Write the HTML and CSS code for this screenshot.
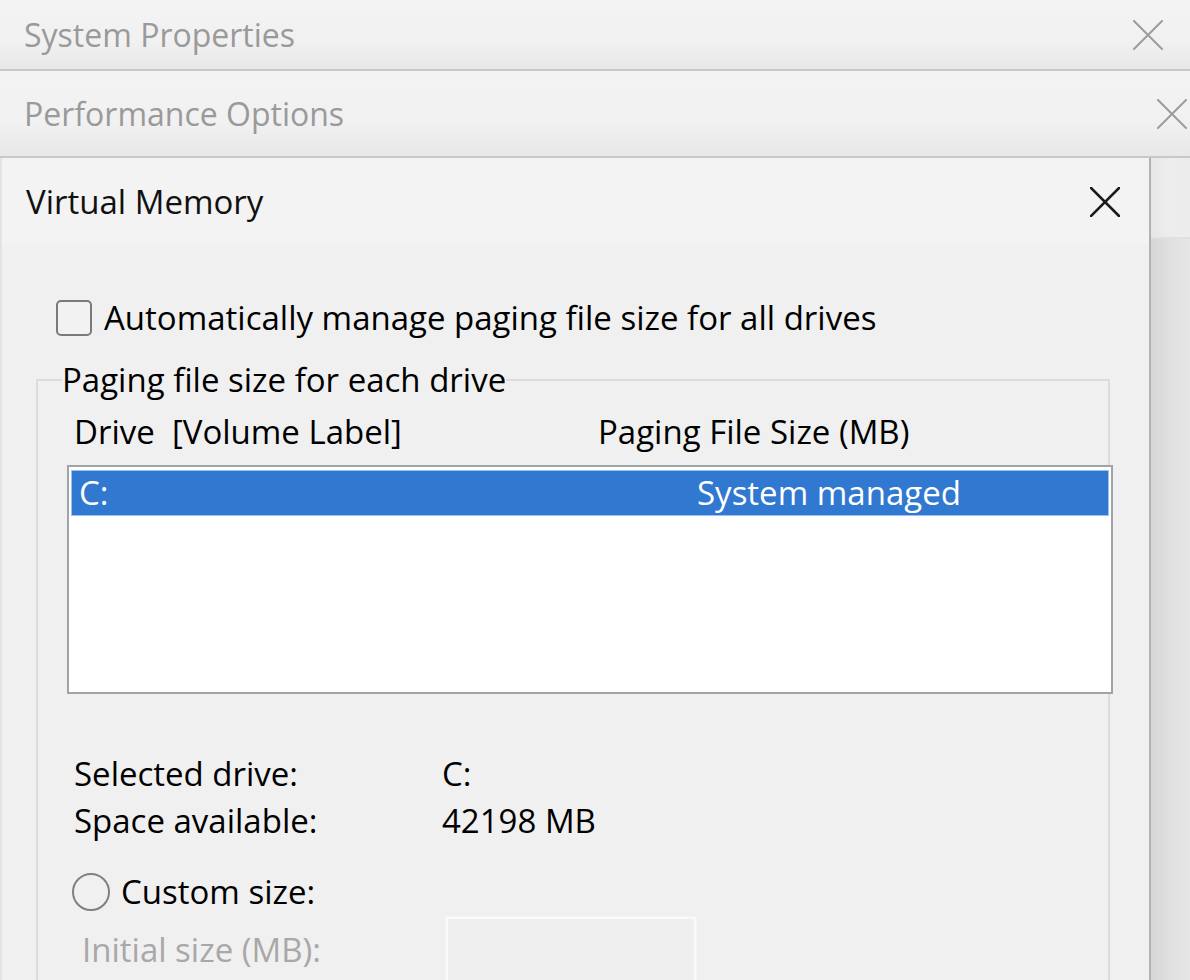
FILE: index.html
```html
<!DOCTYPE html>
<html lang="en">
<head>
<meta charset="utf-8">
<title>Virtual Memory</title>
<link rel="stylesheet" href="styles.css">
</head>
<body>
<div class="screen">
  <header class="bar bar-sys">
    <span class="bar-title">System Properties</span>
    <svg class="x-icon x-gray" viewBox="0 0 30 30" width="30" height="30"><path d="M1 1 L29 29 M29 1 L1 29"/></svg>
  </header>
  <header class="bar bar-perf">
    <span class="bar-title">Performance Options</span>
    <svg class="x-icon x-gray" viewBox="0 0 30 30" width="30" height="30"><path d="M1 1 L29 29 M29 1 L1 29"/></svg>
  </header>
  <div class="stack">
    <section class="vm">
      <div class="vm-title">
        <span>Virtual Memory</span>
        <svg class="x-icon x-dark" viewBox="0 0 30 30" width="30" height="30"><path d="M1 1 L29 29 M29 1 L1 29"/></svg>
      </div>
      <div class="vm-body">
        <label class="check-row">
          <span class="checkbox"></span>
          <span>Automatically manage paging file size for all drives</span>
        </label>
        <fieldset class="group">
          <legend>Paging file size for each drive</legend>
          <div class="list-head">
            <span class="col-drive">Drive  [Volume Label]</span>
            <span class="col-size">Paging File Size (MB)</span>
          </div>
          <div class="listbox">
            <div class="list-row selected">
              <span class="row-drive">C:</span>
              <span class="row-size">System managed</span>
            </div>
          </div>
          <dl class="info">
            <dt>Selected drive:</dt><dd>C:</dd>
            <dt>Space available:</dt><dd>42198 MB</dd>
          </dl>
          <label class="radio-row">
            <span class="radio"></span>
            <span>Custom size:</span>
          </label>
          <div class="field-row">
            <span class="field-label">Initial size (MB):</span>
            <span class="field-input"></span>
          </div>
        </fieldset>
      </div>
    </section>
    <aside class="behind">
      <div class="behind-top"></div>
      <div class="behind-body"></div>
    </aside>
  </div>
</div>
</body>
</html>
```
FILE: styles.css
```css
* { box-sizing: border-box; }
html, body {
  margin: 0;
  padding: 0;
  width: 1190px;
  height: 980px;
  overflow: hidden;
  background: #f0f0f0;
}
body {
  font-family: "Open Sans", "Noto Sans", sans-serif;
  font-size: 33px;
  color: #000;
}
.screen {
  display: flex;
  flex-direction: column;
  height: 980px;
}
.bar {
  display: flex;
  flex: none;
  align-items: center;
  justify-content: space-between;
  background: linear-gradient(to bottom, #f3f3f3 0%, #f1f1f1 60%, #e8e8e8 100%);
  border-bottom: 2px solid #c8c8c8;
  color: #9a9a9a;
  line-height: 44px;
  padding-left: 24px;
}
.bar-title { font-size: 32px; }
.bar-sys {
  height: 71px;
  padding-right: 27px;
}
.bar-perf {
  height: 87px;
  padding-right: 3px;
}
.x-icon {
  fill: none;
  stroke-linecap: square;
  flex: none;
}
.x-gray { stroke: #9c9c9c; stroke-width: 2; }
.x-dark { stroke: #1a1a1a; stroke-width: 2.6; }

.stack {
  display: flex;
  flex: 1;
  min-height: 0;
  overflow: hidden;
}
.vm {
  width: 1151px;
  flex: none;
  border-left: 2px solid #e3e3e3;
  border-right: 2px solid #b2b2b2;
  background: #f0f0f0;
  display: flex;
  flex-direction: column;
}
.vm-title {
  flex: none;
  height: 87px;
  background: #f3f3f3;
  display: flex;
  align-items: center;
  justify-content: space-between;
  padding-left: 24px;
  padding-right: 29px;
  line-height: 44px;
  color: #111;
}
.vm-body {
  flex: none;
  padding-top: 53px;
}
.check-row {
  display: flex;
  align-items: center;
  gap: 12px;
  height: 40px;
  line-height: 40px;
  margin-left: 54px;
}
.checkbox {
  width: 36px;
  height: 36px;
  border: 2px solid #7a7a7a;
  border-radius: 5px;
  background: #f2f2f2;
  flex: none;
}
.group {
  margin: 22px 0 0 34px;
  width: 1074px;
  height: 700px;
  padding: 0;
  border: 2px solid #dcdcdc;
  min-width: 0;
}
.group legend {
  margin-left: 24px;
  padding: 0;
  line-height: 40px;
}
.list-head {
  display: flex;
  margin-top: 12px;
  padding-left: 36px;
  line-height: 40px;
  white-space: pre;
}
.col-drive { width: 524px; }
.listbox {
  margin: 13px 0 0 29px;
  width: 1046px;
  height: 229px;
  border: 2px solid #a0a4a9;
  background: #fff;
  padding: 4px 3px;
}
.list-row {
  display: flex;
  height: 44px;
  line-height: 44px;
  padding-left: 7px;
}
.list-row.selected {
  background: #3078d0;
  color: #fff;
  box-shadow: 0 0 0 1px #9cc1ee;
}
.row-drive { width: 618px; }
.info {
  display: grid;
  grid-template-columns: 368px auto;
  margin: 56px 0 0 36px;
  line-height: 47px;
}
.info dt, .info dd { margin: 0; }
.radio-row {
  display: flex;
  align-items: center;
  gap: 11px;
  height: 40px;
  line-height: 40px;
  margin: 28px 0 0 34px;
}
.radio {
  width: 38px;
  height: 38px;
  border: 2px solid #808080;
  border-radius: 50%;
  flex: none;
}
.field-row {
  display: flex;
  align-items: center;
  margin: 5px 0 0 44px;
  color: #a8a8a8;
  line-height: 40px;
}
.field-label { width: 364px; }
.field-input {
  width: 250px;
  height: 66px;
  border: 2px solid #fafafa;
  outline: 1px solid #f4f4f4;
  background: #efefef;
}

.behind {
  flex: 1;
  display: flex;
  flex-direction: column;
}
.behind-top {
  flex: none;
  height: 81px;
  background: linear-gradient(to right, #e6e6e6, #ededed 40%, #ececec);
  border-bottom: 2px solid #e0e0e0;
}
.behind-body {
  flex: 1;
  background: linear-gradient(to right, #d6d6d6, #e0e0e0 50%, #e6e6e6);
}
```
